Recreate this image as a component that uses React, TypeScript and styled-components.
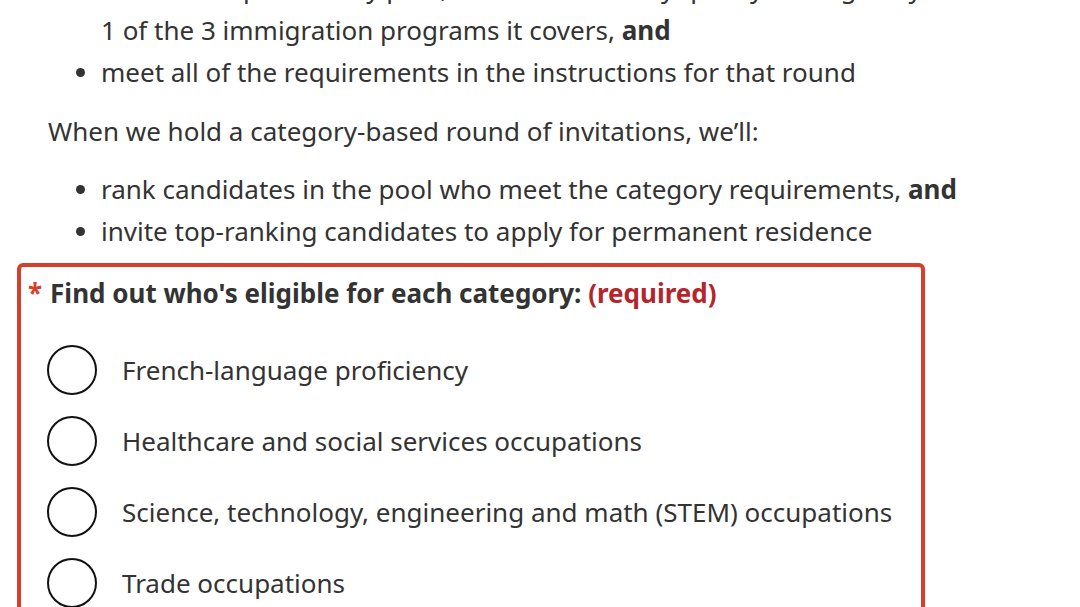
import React from 'react';
import styled, { createGlobalStyle } from 'styled-components';

const GlobalStyle = createGlobalStyle`
  html, body {
    margin: 0;
    padding: 0;
    background: #ffffff;
  }
  body {
    font-family: "Noto Sans", "Open Sans", "Liberation Sans", sans-serif;
    color: #333333;
    overflow: hidden;
  }
`;

const Page = styled.main`
  width: 1080px;
  height: 607px;
  overflow: hidden;
  padding: 0 0 0 17px;
  box-sizing: border-box;
`;

const Flow = styled.div`
  margin-top: -33px;
`;

const Paragraph = styled.p`
  margin: 17px 0 16px 31px;
  font-size: 26px;
  line-height: 42px;
`;

const BulletList = styled.ul`
  list-style: none;
  margin: 0 0 0 31px;
  padding: 0 0 0 53px;
`;

const BulletItem = styled.li`
  position: relative;
  font-size: 26px;
  line-height: 42px;
  white-space: nowrap;

  &::before {
    content: '';
    position: absolute;
    left: -25px;
    top: 17px;
    width: 9px;
    height: 9px;
    border-radius: 50%;
    background: #333333;
  }
`;

const Fieldset = styled.fieldset`
  margin: 11px 0 0 0;
  width: 908px;
  box-sizing: border-box;
  border: 4px solid #d6402b;
  border-radius: 6px;
  padding: 5px 0 40px 7px;
  min-height: 400px;
`;

const Legend = styled.div`
  font-size: 26px;
  line-height: 42px;
  font-weight: 700;
  color: #333333;
  margin-bottom: 31px;
  white-space: nowrap;
`;

const Asterisk = styled.span`
  color: #d6402b;
  margin-right: 8px;
`;

const Required = styled.span`
  color: #b3262b;
`;

const Options = styled.div`
  display: flex;
  flex-direction: column;
  gap: 21px;
  padding-left: 19px;
`;

const Option = styled.label`
  display: flex;
  align-items: center;
  gap: 25px;
  height: 50px;
  font-size: 26px;
  color: #333333;
  white-space: nowrap;
`;

const Radio = styled.span`
  width: 50px;
  height: 50px;
  box-sizing: border-box;
  border: 2.5px solid #111111;
  border-radius: 50%;
  flex-shrink: 0;
  background: #ffffff;
`;

const categories = [
  'French-language proficiency',
  'Healthcare and social services occupations',
  'Science, technology, engineering and math (STEM) occupations',
  'Trade occupations',
];

export default function App() {
  return (
    <>
      <GlobalStyle />
      <Page>
        <Flow>
          <BulletList>
            <BulletItem>
              be in the Express Entry pool, which means they qualify for eligibility in at least
              <br />
              1 of the 3 immigration programs it covers, <b>and</b>
            </BulletItem>
            <BulletItem>meet all of the requirements in the instructions for that round</BulletItem>
          </BulletList>
          <Paragraph>When we hold a category-based round of invitations, we’ll:</Paragraph>
          <BulletList>
            <BulletItem>
              rank candidates in the pool who meet the category requirements, <b>and</b>
            </BulletItem>
            <BulletItem>invite top-ranking candidates to apply for permanent residence</BulletItem>
          </BulletList>
        </Flow>
        <Fieldset>
          <Legend>
            <Asterisk>*</Asterisk>Find out who's eligible for each category:{' '}
            <Required>(required)</Required>
          </Legend>
          <Options>
            {categories.map((c) => (
              <Option key={c}>
                <Radio />
                {c}
              </Option>
            ))}
          </Options>
        </Fieldset>
      </Page>
    </>
  );
}
